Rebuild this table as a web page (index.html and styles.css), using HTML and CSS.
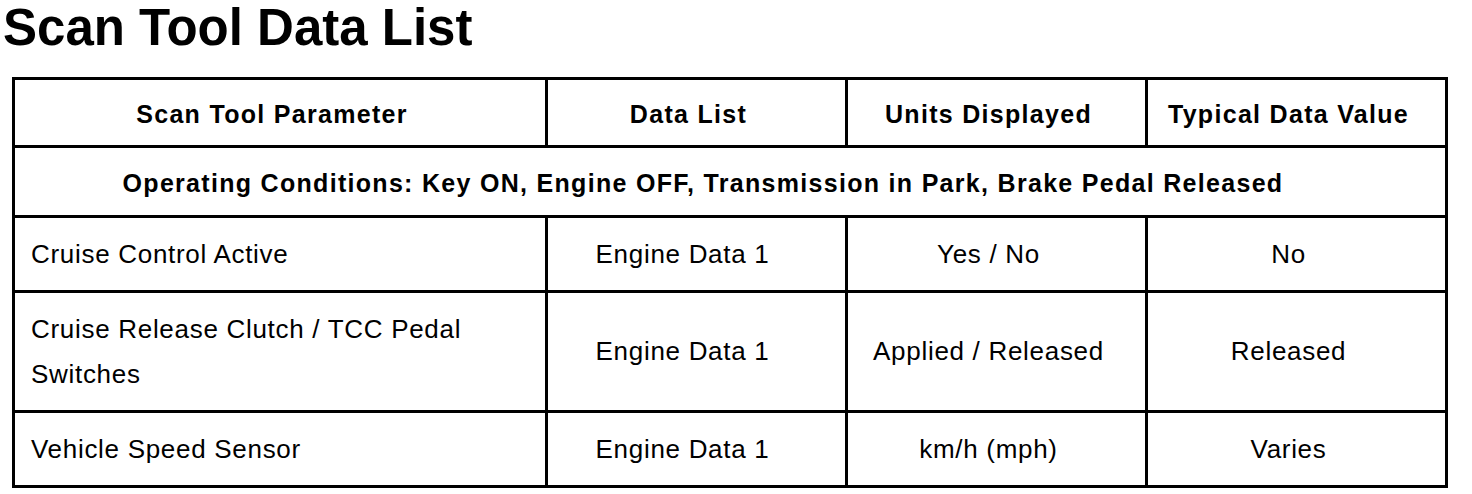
FILE: index.html
```html
<!DOCTYPE html>
<html lang="en">
<head>
<meta charset="utf-8">
<title>Scan Tool Data List</title>
<link rel="stylesheet" href="styles.css">
</head>
<body>
<h1 class="title">Scan Tool Data List</h1>
<table class="data-table">
  <colgroup>
    <col class="col-param">
    <col class="col-data">
    <col class="col-data">
    <col class="col-data">
  </colgroup>
  <thead>
    <tr class="row-head">
      <th class="cell">Scan Tool Parameter</th>
      <th class="cell">Data List</th>
      <th class="cell">Units Displayed</th>
      <th class="cell">Typical Data Value</th>
    </tr>
  </thead>
  <tbody>
    <tr class="row-cond">
      <th class="cell cell-cond" colspan="4">Operating Conditions: Key ON, Engine OFF, Transmission in Park, Brake Pedal Released</th>
    </tr>
    <tr class="row-single">
      <td class="cell cell-param">Cruise Control Active</td>
      <td class="cell cell-list">Engine Data 1</td>
      <td class="cell">Yes / No</td>
      <td class="cell">No</td>
    </tr>
    <tr class="row-double">
      <td class="cell cell-param">Cruise Release Clutch / TCC Pedal Switches</td>
      <td class="cell cell-list">Engine Data 1</td>
      <td class="cell">Applied / Released</td>
      <td class="cell">Released</td>
    </tr>
    <tr class="row-single">
      <td class="cell cell-param">Vehicle Speed Sensor</td>
      <td class="cell cell-list">Engine Data 1</td>
      <td class="cell">km/h (mph)</td>
      <td class="cell">Varies</td>
    </tr>
  </tbody>
</table>
</body>
</html>
```

FILE: styles.css
```css
html, body {
  margin: 0;
  padding: 0;
  background: #ffffff;
  color: #000000;
  font-family: "Liberation Sans", Arial, sans-serif;
}

.title {
  margin: 0 0 21px 0;
  padding-left: 3px;
  font-size: 51px;
  line-height: 56px;
  font-weight: bold;
}

.data-table {
  margin-left: 12px;
  width: 1436px;
  table-layout: fixed;
  border-collapse: separate;
  border-spacing: 0;
  border-top: 3px solid #000;
  border-left: 3px solid #000;
}

.col-param { width: 533px; }
.col-data { width: 300px; }

.cell {
  border-right: 3px solid #000;
  border-bottom: 3px solid #000;
  padding: 0 32px 0 16px;
  text-align: center;
  vertical-align: middle;
  font-size: 26px;
  letter-spacing: 0.7px;
  font-weight: normal;
  line-height: 45px;
}

thead .cell,
.cell-cond {
  font-weight: bold;
  font-size: 25px;
  letter-spacing: 1.3px;
  padding-top: 3px;
}

.cell-cond {
  padding-right: 70px;
}

.cell-param {
  text-align: left;
}

.cell-list {
  padding-right: 44px;
}

.row-head { height: 68px; }
.row-cond { height: 70px; }
.row-single { height: 75px; }
.row-double { height: 120px; }
```
